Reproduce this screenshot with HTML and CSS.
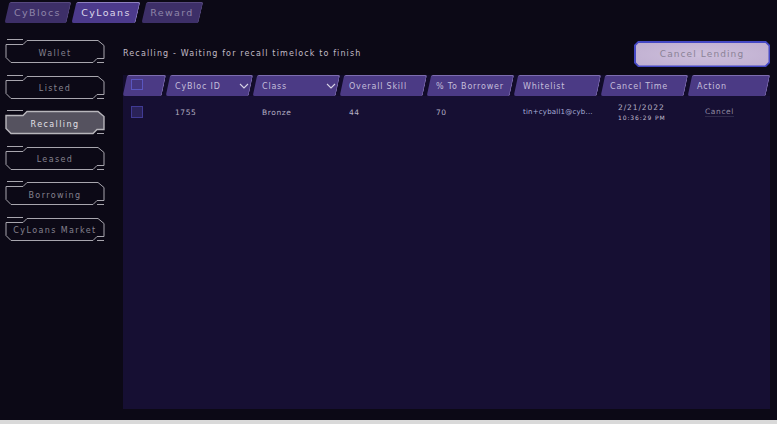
FILE: index.html
```
<!DOCTYPE html>
<html lang="en">
<head>
<meta charset="utf-8">
<title>CyLoans</title>
<link rel="stylesheet" href="styles.css">
</head>
<body>
<svg class="defs" width="0" height="0" aria-hidden="true">
  <symbol id="frame" viewBox="0 0 100 26">
    <path class="frame-fill" d="M1 6.5H18L22 2.5H93L99 7.5V20.5H92L88 24.5H6L1 19.5Z"/>
    <path class="frame-line" d="M2 1.5H18M99 24.5H92"/>
  </symbol>
</svg>
<div class="app">
  <nav class="tabs">
    <a class="tab tab-blocs">CyBlocs</a>
    <a class="tab tab-active">CyLoans</a>
    <a class="tab tab-short">Reward</a>
  </nav>
  <div class="content">
    <aside class="side">
      <a class="side-btn"><svg class="frame"><use href="#frame"/></svg><span>Wallet</span></a>
      <a class="side-btn"><svg class="frame"><use href="#frame"/></svg><span>Listed</span></a>
      <a class="side-btn side-active"><svg class="frame"><use href="#frame"/></svg><span>Recalling</span></a>
      <a class="side-btn"><svg class="frame"><use href="#frame"/></svg><span>Leased</span></a>
      <a class="side-btn"><svg class="frame"><use href="#frame"/></svg><span>Borrowing</span></a>
      <a class="side-btn"><svg class="frame"><use href="#frame"/></svg><span>CyLoans Market</span></a>
    </aside>
    <main class="main">
      <div class="top">
        <p class="status">Recalling - Waiting for recall timelock to finish</p>
        <button class="cancel-lending"><span>Cancel Lending</span></button>
      </div>
      <section class="panel">
        <div class="grid head">
          <div class="th th-check"><span class="check check-head"></span></div>
          <div class="th">CyBloc ID<svg class="chev" viewBox="0 0 10 6"><path d="M1 1l4 4 4-4"/></svg></div>
          <div class="th">Class<svg class="chev" viewBox="0 0 10 6"><path d="M1 1l4 4 4-4"/></svg></div>
          <div class="th">Overall Skill</div>
          <div class="th">% To Borrower</div>
          <div class="th">Whitelist</div>
          <div class="th">Cancel Time</div>
          <div class="th">Action</div>
        </div>
        <div class="grid row">
          <div class="td td-check"><span class="check"></span></div>
          <div class="td">1755</div>
          <div class="td">Bronze</div>
          <div class="td">44</div>
          <div class="td">70</div>
          <div class="td td-mail">tin+cyball1@cyb...</div>
          <div class="td td-time"><span>2/21/2022</span><small>10:36:29 PM</small></div>
          <div class="td td-action"><a>Cancel</a></div>
        </div>
      </section>
    </main>
  </div>
</div>
</body>
</html>
```
FILE: styles.css
```
* { box-sizing: border-box; }
html { background: #d9d9d9; }
body {
  margin: 0;
  font-family: "DejaVu Sans", sans-serif;
  font-size: 8px;
  letter-spacing: 0.9px;
  color: #b9b6c4;
}
.defs { position: absolute; }
.app { height: 420px; background: #0c0916; display: flex; flex-direction: column; overflow: hidden; }

.tabs { display: flex; gap: 5.5px; padding: 2px 0 0 6.5px; height: 38px; }
.tab {
  position: relative;
  z-index: 0;
  width: 64px;
  height: 21px;
  display: flex;
  align-items: center;
  justify-content: center;
  font-size: 9.5px;
  letter-spacing: 1.35px;
  color: #8f86a8;
}
.tab-blocs { width: 62px; }
.tab-short { width: 57px; }
.tab::before {
  content: "";
  position: absolute;
  inset: 0;
  z-index: -1;
  background: #3d2f68;
  border-top: 1px solid #57497f;
  border-right: 1px solid #57497f;
  border-radius: 2px;
  transform: skewX(-13deg);
}
.tab-active { color: #dcd8ea; }
.tab-active::before { background: #4c3a8c; border-color: #8d7fc0; }

.content { display: flex; flex: 1; min-height: 0; }
.side { width: 123px; padding: 0 0 0 5px; display: flex; flex-direction: column; gap: 9.6px; flex: none; }
.side-btn {
  --frame-fill: none;
  --frame-stroke: #a8a6ae;
  --frame-width: 1;
  position: relative;
  width: 100px;
  height: 26px;
  display: flex;
  align-items: center;
  justify-content: center;
  color: #85828e;
  letter-spacing: 1.4px;
  padding-top: 4px;
}
.side-btn span { position: relative; }
.frame { position: absolute; inset: 0; width: 100px; height: 26px; }
.frame-fill { fill: var(--frame-fill); stroke: var(--frame-stroke); stroke-width: var(--frame-width); }
.frame-line { fill: none; stroke: #a8a6ae; stroke-width: 1; }
.side-active { --frame-fill: #55525f; --frame-stroke: #b8b6bc; --frame-width: 1.4; color: #e3e0e8; }

.main { flex: 1; padding-right: 7px; display: flex; flex-direction: column; min-width: 0; }
.top { display: flex; align-items: flex-start; justify-content: space-between; height: 37px; padding-top: 3px; }
.status { margin: 0; color: #c2bcc6; letter-spacing: 1.12px; line-height: 25px; }
.cancel-lending {
  position: relative;
  z-index: 0;
  width: 136px;
  height: 26px;
  padding: 0;
  border: 0;
  font: inherit;
  font-size: 9px;
  letter-spacing: 1.1px;
  color: #8a8296;
  background: #4548c4;
  clip-path: polygon(4px 0, calc(100% - 4px) 0, 100% 4px, 100% calc(100% - 4px), calc(100% - 4px) 100%, 4px 100%, 0 calc(100% - 4px), 0 4px);
}
.cancel-lending::before {
  content: "";
  position: absolute;
  inset: 1.5px;
  z-index: -1;
  background: radial-gradient(ellipse at center, #cdbfdb, #bfaed0);
  clip-path: polygon(3.5px 0, calc(100% - 3.5px) 0, 100% 3.5px, 100% calc(100% - 3.5px), calc(100% - 3.5px) 100%, 3.5px 100%, 0 calc(100% - 3.5px), 0 3.5px);
}
.panel { height: 334px; background: #160f33; }
.grid { display: grid; grid-template-columns: 43px repeat(6, 87px) 82px; }
.head { height: 21px; background: #120c2a; }
.th {
  position: relative;
  z-index: 0;
  display: flex;
  align-items: center;
  padding: 1px 0 0 9px;
  color: #c5bfdb;
  letter-spacing: 0.8px;
}
.th::before {
  content: "";
  position: absolute;
  inset: 0 2px;
  z-index: -1;
  background: #4b3a85;
  border-top: 1px solid #7d6daf;
  border-right: 1px solid #7d6daf;
  border-radius: 2px;
  transform: skewX(-12deg);
}
.th-check { padding: 0 0 0 8px; }
.chev { width: 10px; height: 6px; position: absolute; right: 4px; top: 8px; }
.chev path { fill: none; stroke: #d8d4e6; stroke-width: 1.1; }
.check {
  display: block;
  flex: none;
  width: 12px;
  height: 12px;
  background: #2a2258;
  border: 1px solid #403a94;
}
.check-head { background: #443680; border-color: #5a56c0; height: 11px; margin-bottom: 2px; }
.row { height: 31px; padding-top: 1px; }
.td { display: flex; align-items: center; padding-left: 9px; color: #b5b0c4; font-size: 7.5px; letter-spacing: 0.6px; }
.td-check { padding-left: 8px; }
.td-mail { color: #a9b0dc; font-size: 7px; letter-spacing: 0.2px; }
.td-time { flex-direction: column; align-items: flex-start; justify-content: center; gap: 2px; padding-left: 17px; letter-spacing: 0.9px; }
.td-time small { font-size: 6px; color: #c3bed0; }
.td-action { padding-left: 17px; }
.td-action a { color: #8f8aa0; border-bottom: 1px solid #2f2a4a; }
```
